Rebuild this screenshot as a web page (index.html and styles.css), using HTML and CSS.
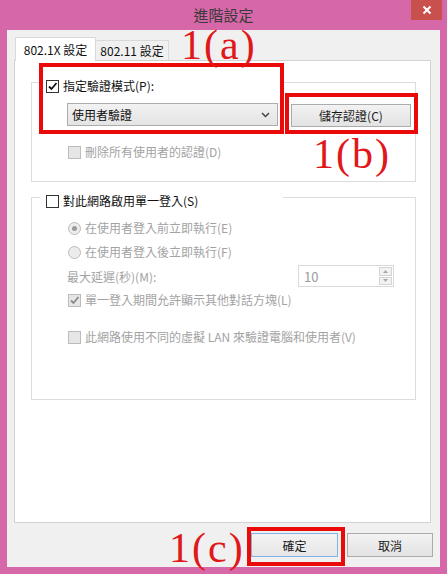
FILE: index.html
```html
<!DOCTYPE html>
<html lang="zh-Hant">
<head>
<meta charset="utf-8">
<title>進階設定</title>
<link rel="stylesheet" href="styles.css">
</head>
<body>
<div class="screen">
  <div class="titlebar">
    <span></span>
    <div class="title">進階設定</div>
    <div class="close">
      <svg width="10" height="10" viewBox="0 0 10 10"><path d="M1.5 1.5 L8.5 8.5 M8.5 1.5 L1.5 8.5" stroke="#fff" stroke-width="2" fill="none"/></svg>
    </div>
  </div>
  <div class="client">
    <div class="tabs">
      <div class="tab tab-active">802.1X 設定</div>
      <div class="tab tab-2">802.11 設定</div>
    </div>
    <div class="panel">
      <div class="group g1">
        <div class="group-head">
          <span class="cb">
            <svg width="11" height="11" viewBox="0 0 11 11"><path d="M2 5.5 L4.5 8 L9.5 2" stroke="#111" stroke-width="1.8" fill="none"/></svg>
          </span>
          <span>指定驗證模式(P):</span>
        </div>
        <div class="row-select">
          <div class="select">
            <span>使用者驗證</span>
            <svg width="9" height="6" viewBox="0 0 9 6"><path d="M1 1 L4.5 4.5 L8 1" stroke="#444" stroke-width="1.5" fill="none"/></svg>
          </div>
          <div class="btn btn-save">儲存認證(C)</div>
        </div>
        <div class="opt opt-del dis"><span class="cb cb-dis"></span><span>刪除所有使用者的認證(D)</span></div>
      </div>
      <div class="group g2">
        <div class="group-head">
          <span class="cb"></span>
          <span>對此網路啟用單一登入(S)</span>
        </div>
        <div class="opt opt-r1 dis"><span class="radio"><span class="dot"></span></span><span>在使用者登入前立即執行(E)</span></div>
        <div class="opt opt-r2 dis"><span class="radio"></span><span>在使用者登入後立即執行(F)</span></div>
        <div class="delay dis">
          <span>最大延遲(秒)(M):</span>
          <div class="spin">
            <span class="spin-val">10</span>
            <div class="spin-btns">
              <span class="spin-b"><svg width="5" height="3" viewBox="0 0 5 3"><path d="M0 3 L2.5 0 L5 3Z" fill="#a8a8a8"/></svg></span>
              <span class="spin-b"><svg width="5" height="3" viewBox="0 0 5 3"><path d="M0 0 L2.5 3 L5 0Z" fill="#a8a8a8"/></svg></span>
            </div>
          </div>
        </div>
        <div class="opt opt-c1 dis">
          <span class="cb cb-dis">
            <svg width="11" height="11" viewBox="0 0 11 11"><path d="M2 5.5 L4.5 8 L9.5 2" stroke="#8a8a8a" stroke-width="1.8" fill="none"/></svg>
          </span>
          <span>單一登入期間允許顯示其他對話方塊(L)</span>
        </div>
        <div class="opt opt-c2 dis"><span class="cb cb-dis"></span><span>此網路使用不同的虛擬 LAN 來驗證電腦和使用者(V)</span></div>
      </div>
    </div>
    <div class="footer">
      <div class="btn btn-ok">確定</div>
      <div class="btn btn-cancel">取消</div>
    </div>
  </div>

  <div class="mark-box mark-box-a"></div>
  <div class="mark-box mark-box-b"></div>
  <div class="mark-box mark-box-c"></div>
  <div class="mark-text mark-a">1(a)</div>
  <div class="mark-text mark-b">1(b)</div>
  <div class="mark-text mark-c">1(c)</div>
</div>
</body>
</html>
```
FILE: styles.css
```css
html, body { margin: 0; padding: 0; }

.screen {
  position: relative;
  width: 447px;
  height: 574px;
  background: #d667a8;
  overflow: hidden;
  font-family: "Noto Sans CJK TC", "Noto Sans", sans-serif;
  font-size: 12px;
  color: #111;
}

.titlebar {
  height: 30px;
  display: grid;
  grid-template-columns: 1fr auto 1fr;
  align-items: start;
}
.title {
  font-size: 15px;
  line-height: 30px;
  color: #3a3a3a;
}
.close {
  justify-self: end;
  margin-right: 5px;
  width: 31px;
  height: 20px;
  background: #c8504d;
  display: flex;
  align-items: center;
  justify-content: center;
}

.client {
  margin-left: 7px;
  width: 433px;
  height: 537px;
  box-sizing: border-box;
  background: #f0f0f0;
  padding: 7px 7px 0 7px;
}

.tabs {
  display: flex;
  align-items: flex-end;
  height: 23px;
  padding-left: 1px;
}
.tab {
  box-sizing: border-box;
  height: 20px;
  border: 1px solid #d9d9d9;
  border-bottom: none;
  display: flex;
  align-items: center;
  justify-content: center;
  background: #f0f0f0;
  color: #111;
}
.tab-active {
  width: 81px;
  height: 24px;
  margin-bottom: -1px;
  background: #fff;
  position: relative;
  z-index: 1;
}
.tab-2 {
  width: 73px;
  border-left: none;
}

.panel {
  width: 417px;
  height: 463px;
  box-sizing: border-box;
  border: 1px solid #d2d2d2;
  background: #fff;
  padding: 21px 0 0 16px;
}

.group {
  width: 385px;
  box-sizing: border-box;
  border: 1px solid #dcdcdc;
}
.g1 { height: 100px; margin-bottom: 15px; }
.g2 { height: 203px; }

.group-head {
  display: flex;
  align-items: center;
  gap: 4px;
  height: 16px;
  width: 243px;
  box-sizing: border-box;
  margin: -5px 0 0 8px;
  padding-left: 6px;
  background: #fff;
  line-height: 16px;
}

.cb {
  width: 13px;
  height: 13px;
  box-sizing: border-box;
  border: 1px solid #333;
  background: #fff;
  display: inline-flex;
  align-items: center;
  justify-content: center;
  flex: none;
}
.cb-dis {
  border-color: #bcbcbc;
  background: #e6e6e6;
}

.radio {
  width: 13px;
  height: 13px;
  box-sizing: border-box;
  border: 1px solid #bcbcbc;
  border-radius: 50%;
  background: #ececec;
  display: inline-flex;
  align-items: center;
  justify-content: center;
  flex: none;
}
.dot {
  width: 5px;
  height: 5px;
  border-radius: 50%;
  background: #9a9a9a;
}

.row-select {
  display: flex;
  align-items: flex-start;
  gap: 13px;
  margin: 9px 0 0 35px;
}
.select {
  width: 211px;
  height: 23px;
  box-sizing: border-box;
  border: 1px solid #acacac;
  background: linear-gradient(#f2f2f2, #e4e4e4);
  display: flex;
  align-items: center;
  justify-content: space-between;
  padding: 0 7px 0 4px;
  color: #111;
}

.btn {
  box-sizing: border-box;
  border: 1px solid #acacac;
  background: linear-gradient(#f2f2f2, #e3e3e3);
  display: flex;
  align-items: center;
  justify-content: center;
  color: #1a1a1a;
}
.btn-save {
  width: 120px;
  height: 23px;
  margin-top: 1px;
}

.opt {
  display: flex;
  align-items: center;
  gap: 4px;
  height: 16px;
  line-height: 16px;
  margin-left: 36px;
}
.dis { color: #a3a3a3; }
.opt-del { margin-top: 17px; }
.opt-r1 { margin-top: 11px; }
.opt-r2 { margin-top: 8px; }
.opt-c1 { margin-top: 5px; }
.opt-c2 { margin-top: 21px; }

.delay {
  display: flex;
  align-items: center;
  justify-content: space-between;
  width: 327px;
  height: 22px;
  margin: 5px 0 0 35px;
}
.spin {
  width: 96px;
  height: 22px;
  box-sizing: border-box;
  border: 1px solid #d9d9d9;
  display: flex;
  align-items: center;
  justify-content: space-between;
  padding: 1px 1px 1px 5px;
}
.spin-val { color: #9a9a9a; font-size: 13px; }
.spin-btns {
  display: flex;
  flex-direction: column;
  gap: 1px;
  height: 18px;
  width: 13px;
}
.spin-b {
  flex: 1;
  border: 1px solid #d4d4d4;
  background: #f2f2f2;
  display: flex;
  align-items: center;
  justify-content: center;
}

.footer {
  display: flex;
  justify-content: flex-end;
  gap: 9px;
  padding-top: 10px;
}
.btn-ok {
  width: 87px;
  height: 24px;
  border-color: #7fb2e5;
  background: linear-gradient(#f3f3f3, #e6e6e6);
}
.btn-cancel {
  width: 86px;
  height: 24px;
}

.mark-box {
  position: absolute;
  box-sizing: border-box;
  border: 4px solid #ea0a0a;
}
.mark-box-a { left: 39px; top: 63px; width: 245px; height: 71px; }
.mark-box-b { left: 285px; top: 93px; width: 133px; height: 41px; }
.mark-box-c { left: 247px; top: 527px; width: 98px; height: 39px; }

.mark-text {
  position: absolute;
  font-family: "Liberation Serif", serif;
  font-size: 42px;
  line-height: 30px;
  color: #e0181c;
  letter-spacing: 2px;
  white-space: nowrap;
}
.mark-a { left: 181px; top: 30px; }
.mark-b { left: 313px; top: 139px; }
.mark-c { left: 169px; top: 533px; }
```
